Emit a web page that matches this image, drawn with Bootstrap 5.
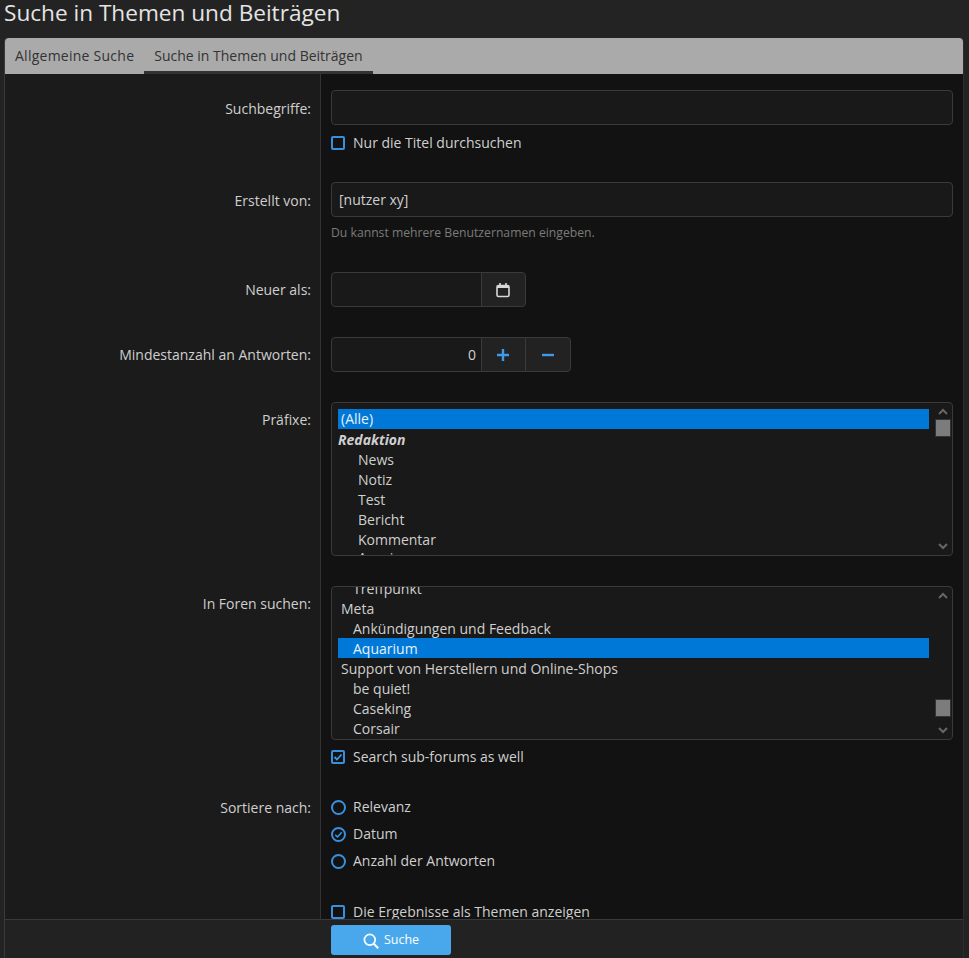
<!DOCTYPE html>
<html lang="de"><head><meta charset="utf-8"><title>Suche</title>
<link href="https://cdn.jsdelivr.net/npm/bootstrap@5.3.0/dist/css/bootstrap.min.css" rel="stylesheet">
<style>
html,body{height:100%;overflow:hidden}
body{background:#232323;color:#cfcfcf;font-family:"Open Sans","Noto Sans","Liberation Sans",sans-serif;font-size:14px;line-height:20px}
.pg-wrap{height:958px;padding:0 5px 0 4px}
.pg-title{font-size:22.6px;line-height:26px;font-weight:400;color:#e4e4e4;margin:0 0 12px;white-space:nowrap}
.pg-panel{height:920px;border-left:1px solid #3a3a3a;border-right:1px solid #2c2c2c;border-radius:4px 4px 0 0}
.tab-head{background:#aaa;height:36px;border-radius:4px 4px 0 0;flex:none;border-bottom:0;gap:0}
.tab-head .nav-link{color:#333;padding:8px 10px 5px;height:36px;border-bottom:3px solid transparent;border-radius:0;font-size:14px}
.tab-head .nav-item:first-child .nav-link{letter-spacing:.25px}
.tab-head .nav-link.active{border-bottom-color:#333;color:#333}
.form-area{min-height:0;overflow:hidden;background:#121212}
.f-row{flex:none}
.f-lab{width:316px;flex:none;background:#1b1b1b;border-right:1px solid #333;text-align:right;padding:23px 9px 0 0;color:#cfcfcf;margin:0;font-size:14px}
.f-val{flex:1;min-width:0;padding:15px 10px}
.f-first .f-lab{padding-top:25px}
.f-first + .f-row .f-lab{padding-top:24px}
.f-first .f-val{padding-top:16px;padding-bottom:14px}
.f-sort .f-lab{padding-top:16px}
.f-sort .f-val{padding-bottom:16px;gap:7px}
.form-control.dk{background:#191919;border:1px solid #3a3a3a;color:#cfcfcf;border-radius:4px;height:35px;padding:6px 7px;font-size:14px;line-height:20px}
.form-check-input.dk{width:14px;height:14px;margin:0;background-color:transparent;border:2px solid #3a8fdc;border-radius:2px;flex:none}
.form-check-input.dk:checked{background-color:transparent;border-color:#3a8fdc;background-size:12px;background-image:url("data:image/svg+xml,%3csvg xmlns='http://www.w3.org/2000/svg' viewBox='0 0 12 12'%3e%3cpath fill='none' stroke='%233a9ae8' stroke-width='1.8' d='M2.5 6l2.5 2.5 4.5-5'/%3e%3c/svg%3e")}
.form-check-input.dk[type=radio]{width:15px;height:15px;border-radius:50%;border-width:2px}
.form-check-input.dk[type=radio]:checked{background-size:13px;background-image:url("data:image/svg+xml,%3csvg xmlns='http://www.w3.org/2000/svg' viewBox='0 0 14 14'%3e%3cpath fill='none' stroke='%233a9ae8' stroke-width='1.6' d='M3.5 7.2l2.5 2.5 4.5-5'/%3e%3c/svg%3e")}
.chk-line{height:20px;gap:8px;margin:0;padding:0;min-height:0;color:#cfcfcf}
.chk-radio{gap:7px}
.chk-gap{margin-top:7px}
.f-first .chk-gap{margin-top:8px}
.hint-txt{font-size:12.2px;line-height:16px;color:#7b7b7b;margin-top:8px;height:17px}
.grp-date{width:195px}
.grp-num{width:240px}
.grp-date .form-control,.grp-num .form-control{width:151px;flex:none;border-radius:4px 0 0 4px}
.addon-btn{width:45px;height:35px;background:#222;border:1px solid #3a3a3a;padding:0 1px 0 0;display:flex;align-items:center;justify-content:center;border-radius:0;margin-left:-1px}
.addon-btn:hover{background:#222;border-color:#3a3a3a}
.addon-end{border-radius:0 4px 4px 0!important}
.addon-wide{width:46px}
.num-val{text-align:right;padding-right:5px!important}
.lst-box{height:154px;background:#191919;border:1px solid #3a3a3a;border-radius:4px;overflow:hidden;position:relative;padding:6px 23px 0 6px}
.lst-scrolled{padding-top:0}
.lst-opt{height:20px;line-height:20px;padding-left:3px;white-space:nowrap;color:#cfcfcf}
.lst-sel{background:#0078d7;color:#e6f2fb}
.lst-box > .lst-sel:first-child{margin-bottom:1px}
.lst-scrolled .lst-sel{margin:-1px 0 1px;line-height:22px}
.lst-grp{font-weight:700;font-style:italic;padding-left:0}
.lst-l1{padding-left:20px}
.lst-l2{padding-left:15px}
.lst-off{margin-top:-8px}
.lst-peek{margin-top:-2px}
.sb-up,.sb-dn{position:absolute;right:2px;width:14px;height:8px}
.sb-up{top:5px}.sb-dn{bottom:5px}
.sb-th{position:absolute;right:1px;width:16px;height:18px;background:#7c7c7c;border:1px solid #333}
.th-a{top:16px}.th-b{top:112px}
.foot-bar{height:39px;flex:none;background:#222;border-top:1px solid #3a3a3a;padding:5px 0 0 326px}
.go-btn{width:120px;height:30px;background:#49a8ec;border:0;border-radius:3px;color:#fff;font-size:12.5px;padding:1px 0 0;gap:5px}
.go-btn:hover{background:#49a8ec;color:#fff}
</style></head>
<body>
<div class="pg-wrap d-flex flex-column">
<h1 class="pg-title">Suche in Themen und Beiträgen</h1>
<div class="pg-panel d-flex flex-column">
<ul class="nav tab-head">
<li class="nav-item"><a class="nav-link" href="#">Allgemeine Suche</a></li>
<li class="nav-item"><a class="nav-link active" href="#">Suche in Themen und Beiträgen</a></li>
</ul>
<form class="form-area flex-grow-1 d-flex flex-column">
<div class="f-row f-first d-flex"><label class="f-lab">Suchbegriffe:</label><div class="f-val">
<input class="form-control dk" type="text">
<label class="form-check chk-line d-flex align-items-center chk-gap"><input class="form-check-input dk" type="checkbox"><span>Nur die Titel durchsuchen</span></label>
</div></div>
<div class="f-row d-flex"><label class="f-lab">Erstellt von:</label><div class="f-val">
<input class="form-control dk" type="text" value="[nutzer xy]">
<div class="hint-txt">Du kannst mehrere Benutzernamen eingeben.</div>
</div></div>
<div class="f-row d-flex"><label class="f-lab">Neuer als:</label><div class="f-val">
<div class="input-group grp-date flex-nowrap"><input class="form-control dk" type="text">
<button type="button" class="btn addon-btn addon-end" aria-label="Kalender"><svg width="16" height="16" viewBox="0 0 16 16" fill="none"><rect x="2" y="3.5" width="12" height="11" rx="1.5" stroke="#d8d8d8" stroke-width="1.6"/><rect x="2" y="3" width="12" height="3" fill="#d8d8d8"/><path d="M5 1v3M11 1v3" stroke="#d8d8d8" stroke-width="1.6"/></svg></button></div>
</div></div>
<div class="f-row d-flex"><label class="f-lab">Mindestanzahl an Antworten:</label><div class="f-val">
<div class="input-group grp-num flex-nowrap"><input class="form-control dk num-val" type="text" value="0">
<button type="button" class="btn addon-btn" aria-label="Plus"><svg width="14" height="14" viewBox="0 0 14 14"><path d="M7 1v12M1 7h12" stroke="#3f9be6" stroke-width="2.4"/></svg></button>
<button type="button" class="btn addon-btn addon-end addon-wide" aria-label="Minus"><svg width="14" height="14" viewBox="0 0 14 14"><path d="M1 7h12" stroke="#3f9be6" stroke-width="2.4"/></svg></button></div>
</div></div>
<div class="f-row d-flex"><label class="f-lab">Präfixe:</label><div class="f-val">
<div class="lst-box">
<div class="lst-opt lst-sel">(Alle)</div>
<div class="lst-opt lst-grp">Redaktion</div>
<div class="lst-opt lst-l1">News</div>
<div class="lst-opt lst-l1">Notiz</div>
<div class="lst-opt lst-l1">Test</div>
<div class="lst-opt lst-l1">Bericht</div>
<div class="lst-opt lst-l1">Kommentar</div>
<div class="lst-opt lst-l1 lst-peek">Anzeige</div>
<svg class="sb-up" viewBox="0 0 14 8"><path d="M3 6l4-4 4 4" fill="none" stroke="#666" stroke-width="2"/></svg><div class="sb-th th-a"></div><svg class="sb-dn" viewBox="0 0 14 8"><path d="M3 2l4 4 4-4" fill="none" stroke="#666" stroke-width="2"/></svg>
</div>
</div></div>
<div class="f-row d-flex"><label class="f-lab">In Foren suchen:</label><div class="f-val">
<div class="lst-box lst-scrolled">
<div class="lst-opt lst-l2 lst-off">Treffpunkt</div>
<div class="lst-opt">Meta</div>
<div class="lst-opt lst-l2">Ankündigungen und Feedback</div>
<div class="lst-opt lst-l2 lst-sel">Aquarium</div>
<div class="lst-opt">Support von Herstellern und Online-Shops</div>
<div class="lst-opt lst-l2">be quiet!</div>
<div class="lst-opt lst-l2">Caseking</div>
<div class="lst-opt lst-l2">Corsair</div>
<svg class="sb-up" viewBox="0 0 14 8"><path d="M3 6l4-4 4 4" fill="none" stroke="#666" stroke-width="2"/></svg><div class="sb-th th-b"></div><svg class="sb-dn" viewBox="0 0 14 8"><path d="M3 2l4 4 4-4" fill="none" stroke="#666" stroke-width="2"/></svg>
</div>
<label class="form-check chk-line d-flex align-items-center chk-gap"><input class="form-check-input dk" type="checkbox" checked><span>Search sub-forums as well</span></label>
</div></div>
<div class="f-row f-sort d-flex"><label class="f-lab">Sortiere nach:</label><div class="f-val d-flex flex-column">
<label class="form-check chk-line chk-radio d-flex align-items-center"><input class="form-check-input dk" type="radio" name="o"><span>Relevanz</span></label>
<label class="form-check chk-line chk-radio d-flex align-items-center"><input class="form-check-input dk" type="radio" name="o" checked><span>Datum</span></label>
<label class="form-check chk-line chk-radio d-flex align-items-center"><input class="form-check-input dk" type="radio" name="o"><span>Anzahl der Antworten</span></label>
</div></div>
<div class="f-row d-flex flex-grow-1"><div class="f-lab"></div><div class="f-val">
<label class="form-check chk-line d-flex align-items-center"><input class="form-check-input dk" type="checkbox"><span>Die Ergebnisse als Themen anzeigen</span></label>
</div></div>
</form>
<div class="foot-bar"><button type="button" class="btn go-btn d-flex align-items-center justify-content-center"><svg width="16" height="16" viewBox="0 0 16 16" fill="none"><circle cx="6.8" cy="6.8" r="5.4" stroke="#fff" stroke-width="1.7"/><path d="M10.8 10.8l4.4 4.4" stroke="#fff" stroke-width="2"/></svg><span>Suche</span></button></div>
</div></div>
</body></html>
